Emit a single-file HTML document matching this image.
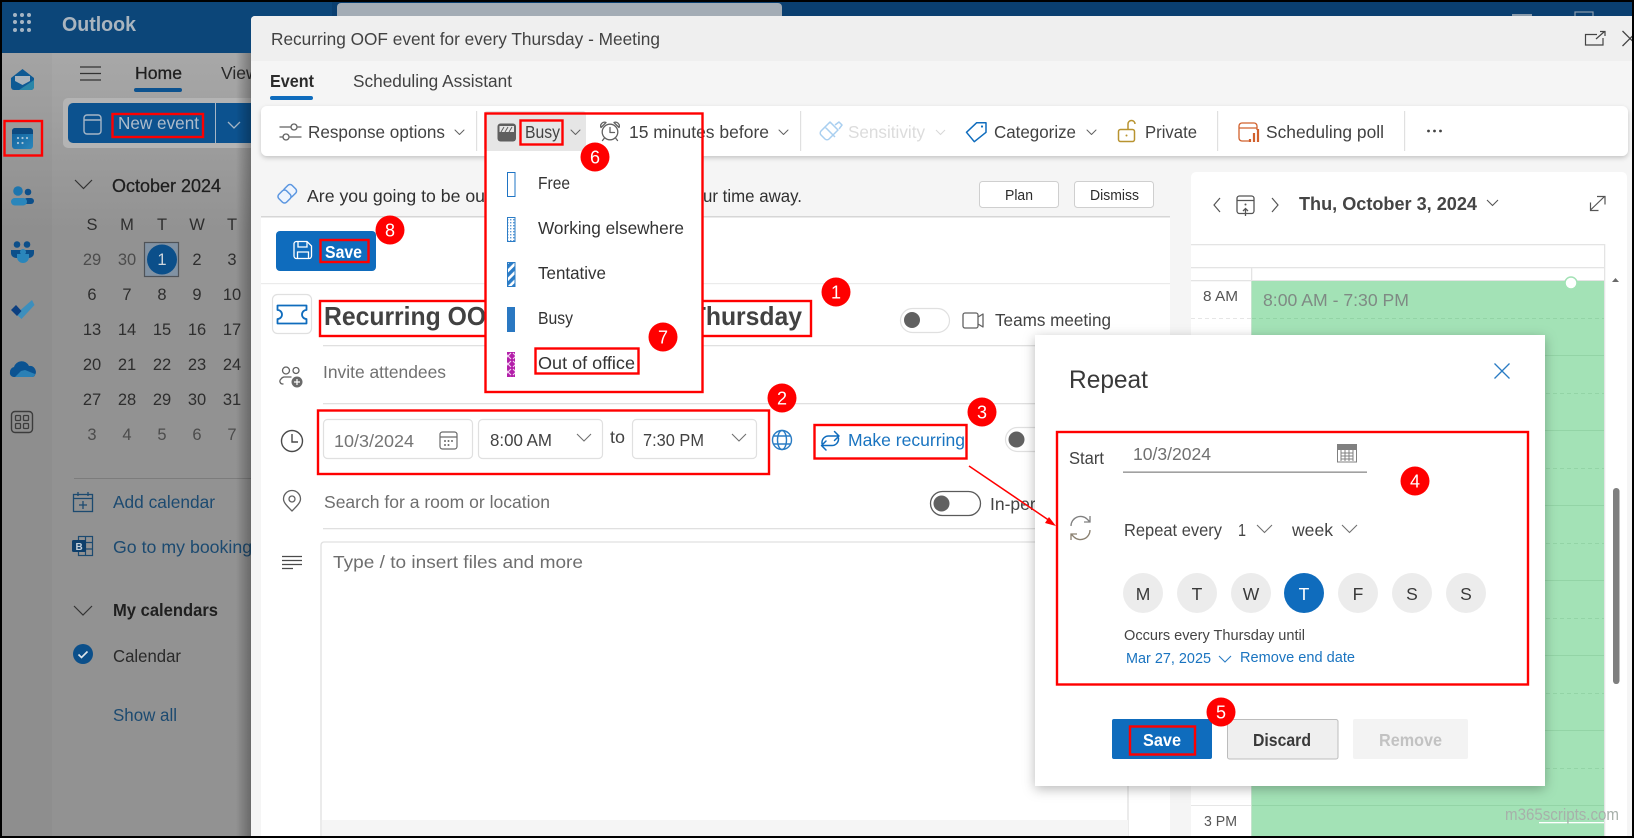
<!DOCTYPE html>
<html><head><meta charset="utf-8"><title>Recurring OOF event</title>
<style>
html,body{margin:0;padding:0;background:#000;width:1634px;height:838px;overflow:hidden}
svg{display:block;font-family:"Liberation Sans",Arial,sans-serif;font-size:17.5px;fill:#424242}
.b{font-weight:700}
.m{text-anchor:middle}
.n{font-size:16.5px;fill:#2e2e2e;text-anchor:middle}
.n2{font-size:16.5px;fill:#4c4c4c;text-anchor:middle}
.ln{fill:none;stroke:#616161;stroke-width:1.3;stroke-linecap:round;stroke-linejoin:round}
.bl{fill:none;stroke:#0f6cbd;stroke-width:1.5;stroke-linecap:round;stroke-linejoin:round}
.bg{fill:#fff;stroke:#e0e0e0;stroke-width:1.2}
.rb{fill:none;stroke:#f00;stroke-width:2.4}
.bd{fill:#f00}
.bt{fill:#fff;font-size:18px;text-anchor:middle}
.sep{stroke:#e0e0e0;stroke-width:1.4}
</style></head><body>
<svg width="1634" height="838" viewBox="0 0 1634 838" xmlns="http://www.w3.org/2000/svg">
<defs>
<linearGradient id="side" x1="0" y1="53" x2="0" y2="230" gradientUnits="userSpaceOnUse"><stop offset="0" stop-color="#a8a8a8"/><stop offset="1" stop-color="#929292"/></linearGradient>
<linearGradient id="rail" x1="0" y1="53" x2="0" y2="230" gradientUnits="userSpaceOnUse"><stop offset="0" stop-color="#a4a4a4"/><stop offset="1" stop-color="#8e8e8e"/></linearGradient>
<linearGradient id="sh" x1="0" y1="0" x2="1" y2="0"><stop offset="0" stop-color="#000" stop-opacity="0"/><stop offset="1" stop-color="#000" stop-opacity=".28"/></linearGradient>
<linearGradient id="cal" x1="0" y1="0" x2="1" y2="1"><stop offset="0" stop-color="#0e5f9b"/><stop offset="1" stop-color="#2a86bb"/></linearGradient>
<pattern id="stripe" width="6" height="6" patternUnits="userSpaceOnUse" patternTransform="rotate(-45)"><rect width="6" height="6" fill="#fff"/><rect width="6" height="3.4" fill="#2b7cc6"/></pattern>
<pattern id="dots" width="3" height="3" patternUnits="userSpaceOnUse"><rect width="3" height="3" fill="#fff"/><rect width="1.4" height="1.4" fill="#5d9bd5"/></pattern>
<pattern id="oof" width="8" height="8" patternUnits="userSpaceOnUse"><rect width="8" height="8" fill="#b31fa9"/><path d="M1 1l6 6M7 1l-6 6" stroke="#f3d2f0" stroke-width="1.2"/></pattern>
<filter id="ds" x="-10%" y="-10%" width="120%" height="130%"><feDropShadow dx="0" dy="2" stdDeviation="2.5" flood-color="#000" flood-opacity=".2"/></filter>
<filter id="ds2" x="-10%" y="-10%" width="120%" height="120%"><feDropShadow dx="0" dy="3" stdDeviation="6" flood-color="#000" flood-opacity=".28"/></filter>
</defs>

<!-- frame -->
<rect width="1634" height="838" fill="#000"/>
<rect x="2" y="2" width="1630" height="834" fill="#0a3f70"/>
<!-- top bar -->
<rect x="2" y="2" width="1630" height="51" fill="#0a3f70"/>
<rect x="2" y="2" width="330" height="51" fill="#0c4679"/>
<rect x="337" y="3" width="445" height="20" rx="4" fill="#a3acb5"/>
<g fill="#a5b5c4"><circle cx="15" cy="15" r="2"/><circle cx="22" cy="15" r="2"/><circle cx="29" cy="15" r="2"/><circle cx="15" cy="22" r="2"/><circle cx="22" cy="22" r="2"/><circle cx="29" cy="22" r="2"/><circle cx="15" cy="30" r="2"/><circle cx="22" cy="30" r="2"/><circle cx="29" cy="30" r="2"/></g>
<text x="62" y="31" textLength="74" lengthAdjust="spacingAndGlyphs" class="b" style="font-size:20px;fill:#aab5bf">Outlook</text>
<rect x="1512" y="14" width="20" height="2" fill="#8a9bab"/>
<rect x="1575" y="12" width="18" height="8" fill="none" stroke="#8a9bab" stroke-width="1.2"/>

<!-- rail + sidebar -->
<rect x="2" y="53" width="50" height="783" fill="url(#rail)"/>
<rect x="52" y="53" width="200" height="783" fill="url(#side)"/>

<!-- rail icons -->
<path d="M22.5 69L34 78V87a3 3 0 0 1-3 3H14a3 3 0 0 1-3-3V78Z" fill="#0e5a94"/>
<path d="M15 76h15v5l-7.500 4-7.500-4z" fill="#a9b3bc"/>
<path d="M19 90L34 80v7a3 3 0 0 1-3 3z" fill="#2a86a8"/>
<rect x="12" y="128" width="21" height="21" rx="3" fill="url(#cal)"/>
<path d="M12 134v-3a3 3 0 0 1 3-3h15a3 3 0 0 1 3 3v3z" fill="#0c4a80"/>
<g fill="#a8c4d8"><circle cx="18" cy="138" r="1.100"/><circle cx="22.500" cy="138" r="1.100"/><circle cx="27" cy="138" r="1.100"/><circle cx="18" cy="143" r="1.100"/><circle cx="22.500" cy="143" r="1.100"/></g>
<circle cx="18" cy="191" r="4.800" fill="#1c75ae"/><circle cx="28" cy="192" r="3.300" fill="#0c4f8a"/>
<rect x="24" y="198" width="10" height="6" rx="3" fill="#0c4f8a"/><rect x="11" y="198" width="16" height="7.500" rx="3.700" fill="#2a86bb"/>
<circle cx="17" cy="244.500" r="3.300" fill="#0c4f8a"/><circle cx="27" cy="244.500" r="3.300" fill="#0c4f8a"/>
<path d="M11 250h23v3a5 5 0 0 1-5 5H16a5 5 0 0 1-5-5z" fill="#0c4f8a"/><path d="M17 254h12v3a6 6 0 0 1-12 0z" fill="#2a86bb"/><circle cx="23" cy="252" r="3" fill="#2a86bb"/>
<polygon points="32,300 34.500,305 21.500,319 16,314" fill="#3d8fbd"/><polygon points="16,305 21.500,311 17,316 11,310" fill="#0c3f80"/>
<path d="M10 372a5 5 0 0 1 4-5 8 8 0 0 1 15-1 6 6 0 0 1 6 9 3 3 0 0 1-3 2H14a4 4 0 0 1-4-5z" fill="#0c5391"/>
<path d="M15 377l6-6 4-1 10 4a3 3 0 0 1-3 3z" fill="#2b80b5"/>
<rect x="11.500" y="411.500" width="21" height="21" rx="3.500" fill="none" stroke="#3c3c3c" stroke-width="1.400"/>
<g fill="none" stroke="#3c3c3c" stroke-width="1.300"><rect x="15.500" y="415.500" width="5" height="5" rx="1"/><rect x="23.500" y="415.500" width="5" height="5" rx="1"/><rect x="15.500" y="423.500" width="5" height="5" rx="1"/><rect x="23.500" y="423.500" width="5" height="5" rx="1"/></g>
<rect x="4.500" y="121" width="37.500" height="34.500" class="rb"/>

<!-- ribbon behind modal -->
<path d="M80 67h21M80 73.500h21M80 80h21" stroke="#333" stroke-width="1.300"/>
<text x="135" y="79" textLength="47" lengthAdjust="spacingAndGlyphs" style="fill:#1f1f1f;stroke:#1f1f1f;stroke-width:.3">Home</text>
<rect x="134" y="88" width="48" height="4" rx="2" fill="#0c528f"/>
<text x="221" y="79" style="fill:#2a2a2a">View</text>
<rect x="63" y="98" width="195" height="50" rx="5" fill="#b4b4b4"/>
<rect x="68" y="103" width="190" height="40" rx="5" fill="#0c528f"/>
<rect x="84" y="115" width="17" height="19" rx="3" fill="none" stroke="#a6b6c6" stroke-width="1.400"/><path d="M84 120h17" stroke="#a6b6c6" stroke-width="1.400"/>
<text x="118" y="129" textLength="81" lengthAdjust="spacingAndGlyphs" style="fill:#aebccb">New event</text>
<rect x="112.500" y="114" width="90.500" height="23" class="rb"/>
<rect x="215" y="103" width="1" height="40" fill="#a6b6c6"/>
<path d="M228 122l6 6 6-6" fill="none" stroke="#a6b6c6" stroke-width="1.300"/>

<!-- month -->
<path d="M75 180l8.500 8.500L92 180" fill="none" stroke="#333" stroke-width="1.200"/>
<text x="112" y="192" textLength="109" lengthAdjust="spacingAndGlyphs" style="font-size:18px;fill:#1e1e1e;stroke:#1e1e1e;stroke-width:.25">October 2024</text>
<g class="n">
<text x="92" y="230" class="n">S</text><text x="127" y="230" class="n">M</text><text x="162" y="230" class="n">T</text><text x="197" y="230" class="n">W</text><text x="232" y="230" class="n">T</text>
</g>
<rect x="144.500" y="242.500" width="34" height="34" fill="#8192a3" stroke="#4f5358" stroke-width="1.200"/>
<circle cx="162" cy="259.500" r="15" fill="#0b4f8a"/>
<text x="162" y="265" class="n" style="fill:#cfd6dd">1</text>
<text x="92" y="265" class="n2">29</text><text x="127" y="265" class="n2">30</text><text x="197" y="265" class="n">2</text><text x="232" y="265" class="n">3</text>
<text x="92" y="300" class="n">6</text><text x="127" y="300" class="n">7</text><text x="162" y="300" class="n">8</text><text x="197" y="300" class="n">9</text><text x="232" y="300" class="n">10</text>
<text x="92" y="335" class="n">13</text><text x="127" y="335" class="n">14</text><text x="162" y="335" class="n">15</text><text x="197" y="335" class="n">16</text><text x="232" y="335" class="n">17</text>
<text x="92" y="370" class="n">20</text><text x="127" y="370" class="n">21</text><text x="162" y="370" class="n">22</text><text x="197" y="370" class="n">23</text><text x="232" y="370" class="n">24</text>
<text x="92" y="405" class="n">27</text><text x="127" y="405" class="n">28</text><text x="162" y="405" class="n">29</text><text x="197" y="405" class="n">30</text><text x="232" y="405" class="n">31</text>
<text x="92" y="440" class="n2">3</text><text x="127" y="440" class="n2">4</text><text x="162" y="440" class="n2">5</text><text x="197" y="440" class="n2">6</text><text x="232" y="440" class="n2">7</text>

<rect x="74" y="478" width="178" height="1" fill="#7c7c7c"/>
<g fill="none" stroke="#1c4a70" stroke-width="1.300"><rect x="73.500" y="494.500" width="19" height="17"/><path d="M73.500 498.500h19M78 492v4M88 492v4M83 501v8M79 505h8"/></g>
<text x="113" y="508" textLength="102" lengthAdjust="spacingAndGlyphs" style="fill:#1c4a70">Add calendar</text>
<g fill="none" stroke="#1c4a70" stroke-width="1.200"><rect x="78.500" y="536.500" width="14" height="19"/><path d="M85.500 536.500v19M85.500 542.500h7M85.500 549h7"/></g>
<rect x="72" y="540" width="14" height="12" rx="1.500" fill="#0e3f6b"/><text x="75.500" y="550" class="b" style="font-size:10px;fill:#c4d0da">B</text>
<text x="113" y="553" textLength="148" lengthAdjust="spacingAndGlyphs" style="fill:#1c4a70">Go to my bookings</text>
<path d="M74 606l9 9 9-9" fill="none" stroke="#333" stroke-width="1.200"/>
<text x="113" y="616" textLength="105" lengthAdjust="spacingAndGlyphs" class="b" style="fill:#1f1f1f">My calendars</text>
<circle cx="83" cy="654" r="10" fill="#0b4f8a"/><path d="M78.500 654.500l3 3 6-6" fill="none" stroke="#dfe6ec" stroke-width="1.600"/>
<text x="113" y="662" textLength="68" lengthAdjust="spacingAndGlyphs" style="fill:#2a2a2a">Calendar</text>
<text x="113" y="721" textLength="64" lengthAdjust="spacingAndGlyphs" style="fill:#1c4a70">Show all</text>

<!-- modal -->
<rect x="236" y="53" width="15" height="783" fill="url(#sh)"/>
<path d="M251 20a4 4 0 0 1 4-4H1632V836H251Z" fill="#f5f5f5"/>
<path d="M251 61V20a4 4 0 0 1 4-4H1632V61Z" fill="#efefef"/>
<text x="271" y="45" textLength="389" lengthAdjust="spacingAndGlyphs">Recurring OOF event for every Thursday - Meeting</text>
<path d="M1597 34.500h-11.500v10.500h17.500v-7" fill="none" stroke="#444" stroke-width="1.200"/><path d="M1596 39l8.500-7.500M1600 31.500h5v4.500" fill="none" stroke="#444" stroke-width="1.200"/>
<path d="M1622.500 31l15 15M1622.500 46l15-15" fill="none" stroke="#444" stroke-width="1.300"/>
<text x="270" y="87" textLength="44" lengthAdjust="spacingAndGlyphs" class="b" style="fill:#2c2c2c">Event</text>
<rect x="270" y="96" width="43" height="4" rx="2" fill="#0f6cbd"/>
<text x="353" y="87" textLength="159" lengthAdjust="spacingAndGlyphs">Scheduling Assistant</text>

<!-- toolbar -->
<rect x="261" y="106" width="1367" height="50" rx="6" fill="#fff" filter="url(#ds)"/>
<g class="ln"><path d="M280 127h11M298 127h3M280 137h3M290 137h11"/><circle cx="294" cy="127" r="3"/><circle cx="286" cy="137" r="3"/></g>
<text x="308" y="138" textLength="137" lengthAdjust="spacingAndGlyphs">Response options</text>
<path d="M455 130l4.500 4.500 4.500-4.500" class="ln" style="stroke-width:1"/>
<rect x="476" y="111" width="1.200" height="40" fill="#e0e0e0"/>
<rect x="484" y="111" width="102" height="40" rx="3" fill="#e6e6e6"/>
<rect x="497.500" y="123.500" width="18.500" height="18" rx="3" fill="#5f5f5f"/>
<rect x="499.500" y="126" width="14.500" height="6" fill="#e6e6e6"/><path d="M501 132l3-5M505 132l3-5M509 132l3-5" stroke="#5f5f5f" stroke-width="1"/>
<text x="525" y="138" textLength="35" lengthAdjust="spacingAndGlyphs">Busy</text>
<path d="M571 130l4.500 4.500 4.500-4.500" class="ln" style="stroke-width:1"/>
<rect x="520.500" y="120.500" width="42" height="24" class="rb"/>
<g class="ln"><circle cx="610" cy="132" r="7.800"/><path d="M610 127.500v5h4.500M601 127.500a3.800 3.800 0 0 1 5-5zM619 127.500a3.800 3.800 0 0 0-5-5zM604.500 138l-2 2.500M615.500 138l2 2.500"/></g>
<text x="629" y="138" textLength="140" lengthAdjust="spacingAndGlyphs">15 minutes before</text>
<path d="M779 130l4.500 4.500 4.500-4.500" class="ln" style="stroke-width:1"/>
<rect x="800" y="111" width="1.200" height="40" fill="#e0e0e0"/>
<g fill="none" stroke="#a9cff0" stroke-width="1.500" stroke-linejoin="round"><path d="M821 131l9-9 8 8-9 9a3 3 0 0 1-4 0l-4-4a3 3 0 0 1 0-4zM825 127l10 10"/><path d="M835 125l4-3 3 3-3 4"/></g>
<text x="848" y="138" textLength="77" lengthAdjust="spacingAndGlyphs" style="fill:#dcdcdc">Sensitivity</text>
<path d="M936 130l4.500 4.500 4.500-4.500" fill="none" stroke="#d8d8d8" stroke-width="1"/>
<path d="M966.500 132.300L976.700 122.700H986V132.300L974.300 141.700Z" class="bl"/><circle cx="982" cy="126.500" r="1.100" fill="#0f6cbd"/>
<text x="994" y="138" textLength="82" lengthAdjust="spacingAndGlyphs">Categorize</text>
<path d="M1087 130l4.500 4.500 4.500-4.500" class="ln" style="stroke-width:1"/>
<g fill="none" stroke="#b89330" stroke-width="1.500"><rect x="1118.500" y="129.500" width="16" height="12" rx="2"/><path d="M1128 129v-5a3.500 3.500 0 0 1 7 0"/></g><circle cx="1126.500" cy="135.500" r="1" fill="#b89330"/>
<text x="1145" y="138" textLength="52" lengthAdjust="spacingAndGlyphs">Private</text>
<rect x="1217" y="111" width="1.200" height="40" fill="#e0e0e0"/>
<path d="M1250 141h-8a3 3 0 0 1-3-3v-12a3 3 0 0 1 3-3h12a3 3 0 0 1 3 3v4M1239 128h18" fill="none" stroke="#d1602c" stroke-width="1.300"/>
<path d="M1250 142v-3M1254 142v-9M1258 142v-13" stroke="#d1602c" stroke-width="2.200"/>
<text x="1266" y="138" textLength="118" lengthAdjust="spacingAndGlyphs">Scheduling poll</text>
<rect x="1404" y="111" width="1.200" height="40" fill="#e0e0e0"/>
<g fill="#444"><circle cx="1428.500" cy="131" r="1.400"/><circle cx="1434.500" cy="131" r="1.400"/><circle cx="1440.500" cy="131" r="1.400"/></g>

<!-- left form -->
<rect x="261" y="172" width="909" height="664" fill="#fff"/>
<rect x="261" y="172" width="909" height="44" fill="#f5f5f5"/>
<rect x="261" y="216" width="909" height="1.500" fill="#d6d6d6"/>
<g fill="#eef4fd" stroke="#5b96e0" stroke-width="1.500"><rect x="284.500" y="185.500" width="11" height="11" rx="3" transform="rotate(45 290 191)"/><rect x="279" y="191" width="11" height="11" rx="3" transform="rotate(45 284.500 196.500)"/></g>
<text x="307" y="202" textLength="178" lengthAdjust="spacingAndGlyphs" style="fill:#303030">Are you going to be ou</text>
<text x="703" y="202" textLength="99" lengthAdjust="spacingAndGlyphs" style="fill:#303030">ur time away.</text>
<rect x="979.500" y="181.500" width="79" height="26" rx="3" fill="#fff" stroke="#cfcfcf"/>
<text x="1005" y="200" textLength="28" lengthAdjust="spacingAndGlyphs" style="font-size:15px;fill:#2c2c2c">Plan</text>
<rect x="1074.500" y="181.500" width="79" height="26" rx="3" fill="#fff" stroke="#cfcfcf"/>
<text x="1090" y="200" textLength="49" lengthAdjust="spacingAndGlyphs" style="font-size:15px;fill:#2c2c2c">Dismiss</text>

<rect x="276" y="231" width="100" height="40" rx="4" fill="#0f6cbd"/>
<g fill="none" stroke="#fff" stroke-width="1.300"><path d="M294 244a2.500 2.500 0 0 1 2.500-2.500H307l4.500 4.500V256a2.500 2.500 0 0 1-2.500 2.500H296.500A2.500 2.500 0 0 1 294 256Z"/><path d="M298 242v5h9v-5M297.500 258v-6h11v6"/></g>
<text x="325" y="258" textLength="37" lengthAdjust="spacingAndGlyphs" class="b" style="fill:#fff">Save</text>
<rect x="320.500" y="240" width="48" height="22" class="rb"/>
<rect x="261" y="283" width="909" height="1.200" fill="#ebebeb"/>

<rect x="272.500" y="294.500" width="39" height="39" rx="5" class="bg"/>
<path d="M277.500 305.500H306.500V310a4.500 4.500 0 0 0 0 9V323.500H277.500V319a4.500 4.500 0 0 0 0-9Z" class="bl" style="stroke-width:1.800"/>
<text x="324" y="325" textLength="478" lengthAdjust="spacingAndGlyphs" class="b" style="font-size:26px;fill:#424242">Recurring OOF event for every Thursday</text>
<rect x="320" y="301" width="491" height="35" class="rb"/>
<rect x="900.500" y="308.500" width="49" height="24" rx="12" fill="#fff" stroke="#e0e0e0" stroke-width="1.200"/>
<circle cx="912" cy="320" r="8" fill="#616161"/>
<path d="M963 315a2 2 0 0 1 2-2h11a2 2 0 0 1 2 2v11a2 2 0 0 1-2 2h-11a2 2 0 0 1-2-2zM978 317l5-3v13l-5-3" class="ln"/>
<text x="995" y="326" textLength="116" lengthAdjust="spacingAndGlyphs">Teams meeting</text>
<rect x="323" y="345" width="847" height="1.300" fill="#e0e0e0"/>

<g class="ln"><circle cx="286" cy="370.500" r="3.500"/><circle cx="296" cy="370.500" r="3"/><path d="M283 384a2.800 2.800 0 0 1-2-5 4.500 4.500 0 0 1 3-2h7"/></g>
<circle cx="297" cy="382" r="5.500" fill="#6a6a6a"/><path d="M297 379v6M294 382h6" stroke="#fff" stroke-width="1.200"/>
<text x="323" y="378" textLength="123" lengthAdjust="spacingAndGlyphs" style="fill:#707070">Invite attendees</text>
<rect x="323" y="403" width="847" height="1.300" fill="#e0e0e0"/>

<circle cx="292" cy="441" r="10.500" fill="none" stroke="#4a4a4a" stroke-width="1.400"/><path d="M292 434v8h6" fill="none" stroke="#4a4a4a" stroke-width="1.400"/>
<rect x="323.500" y="419.500" width="149" height="39" rx="4" class="bg"/>
<text x="334" y="447" textLength="80" lengthAdjust="spacingAndGlyphs" style="fill:#757575">10/3/2024</text>
<g fill="none" stroke="#6a6a6a" stroke-width="1.200"><rect x="440" y="432" width="17" height="17" rx="2.500"/><path d="M440 437h17"/></g>
<g fill="#6a6a6a"><circle cx="445" cy="441" r="1"/><circle cx="448.500" cy="441" r="1"/><circle cx="452" cy="441" r="1"/><circle cx="445" cy="445" r="1"/><circle cx="448.500" cy="445" r="1"/></g>
<rect x="478.500" y="419.500" width="124" height="39" rx="4" class="bg"/>
<text x="490" y="446" textLength="62" lengthAdjust="spacingAndGlyphs">8:00 AM</text>
<path d="M577 434l7 7 7-7" fill="none" stroke="#707070" stroke-width="1.100"/>
<text x="610" y="443" textLength="15" lengthAdjust="spacingAndGlyphs">to</text>
<rect x="632.500" y="419.500" width="124" height="39" rx="4" class="bg"/>
<text x="643" y="446" textLength="61" lengthAdjust="spacingAndGlyphs">7:30 PM</text>
<path d="M732 434l7 7 7-7" fill="none" stroke="#707070" stroke-width="1.100"/>
<rect x="318" y="410.500" width="451" height="63.500" class="rb"/>
<g fill="none" stroke="#2a7cc4" stroke-width="1.400"><circle cx="782" cy="440" r="9.500"/><ellipse cx="782" cy="440" rx="4.500" ry="9.500"/><path d="M773 436h18M773 444h18"/></g>

<path d="M822 443.500v-1a6.500 6.500 0 0 1 6.500-6.500H838.500M834.500 431.500l4.500 4.500-4.500 4.500M838.500 438v1a6.500 6.500 0 0 1-6.500 6.500H822M826 441l-4.500 4.500 4.500 4.500" class="bl"/>
<text x="848" y="446" textLength="117" lengthAdjust="spacingAndGlyphs" style="fill:#1a74c0">Make recurring</text>
<rect x="814.500" y="425" width="152" height="33.500" class="rb"/>
<rect x="1005.500" y="427.500" width="50" height="24" rx="12" fill="#fff" stroke="#e0e0e0" stroke-width="1.200"/>
<circle cx="1016.500" cy="439.500" r="8" fill="#616161"/>

<g class="ln"><path d="M292 511c-5-5-8.500-8.500-8.500-12a8.500 8.500 0 0 1 17 0c0 3.500-3.500 7-8.500 12z"/><circle cx="292" cy="499" r="3"/></g>
<text x="324" y="508" textLength="226" lengthAdjust="spacingAndGlyphs" style="fill:#6e6e6e">Search for a room or location</text>
<rect x="930.500" y="491.500" width="50" height="24" rx="12" fill="#fff" stroke="#5a5a5a" stroke-width="1.300"/>
<circle cx="941.500" cy="503.500" r="8" fill="#616161"/>
<text x="990" y="510" style="fill:#444">In-person event</text>
<rect x="323" y="528" width="847" height="1.300" fill="#e0e0e0"/>

<path d="M282 556.500h20M282 560.500h20M282 564.500h20M282 568.500h11" stroke="#4a4a4a" stroke-width="1.200"/>
<path d="M1128 836V545a3 3 0 0 0-3-3H324a3 3 0 0 0-3 3V836" fill="#fff" stroke="#e0e0e0" stroke-width="1.300"/>
<text x="333" y="568" textLength="250" lengthAdjust="spacingAndGlyphs" style="fill:#6e6e6e">Type / to insert files and more</text>
<rect x="322" y="820" width="806" height="16" fill="#f5f5f5"/>

<!-- calendar panel -->
<rect x="1191" y="172" width="436" height="670" rx="5" fill="#fff"/>
<path d="M1220 198l-6 7 6 7M1272 198l6 7-6 7" fill="none" stroke="#555" stroke-width="1.200"/>
<g fill="none" stroke="#555" stroke-width="1.300"><rect x="1237" y="196" width="17" height="17.500" rx="2.500"/><path d="M1237 200.500h17M1245.500 216v-7M1243 211l2.500-2.500 2.500 2.500"/></g><circle cx="1245.500" cy="204.500" r="1" fill="#555"/>
<text x="1299" y="210" textLength="178" lengthAdjust="spacingAndGlyphs" class="b" style="font-size:18.500px;fill:#454545">Thu, October 3, 2024</text>
<path d="M1487 200l5.500 5.500 5.500-5.500" fill="none" stroke="#555" stroke-width="1.100"/>
<path d="M1590.500 210l14-13.500M1597 196.500h8v8M1590.500 202.500v8h8" fill="none" stroke="#555" stroke-width="1.200"/>
<rect x="1191" y="244" width="413" height="1.300" fill="#e4e4e4"/>
<rect x="1191" y="267" width="413" height="1.300" fill="#e4e4e4"/>
<rect x="1191" y="280" width="413" height="1.300" fill="#e4e4e4"/>
<rect x="1604" y="244" width="1.300" height="592" fill="#e4e4e4"/>
<rect x="1251" y="267" width="1.300" height="569" fill="#e4e4e4"/>
<rect x="1251.500" y="281" width="352.500" height="555" fill="#a3e2b6"/>
<g stroke="#93d4a6" stroke-width="1">
<path d="M1252 355.500h352M1252 430.500h352M1252 505.500h352M1252 580.500h352M1252 655.500h352M1252 730.500h352M1252 805.500h352"/>
<path stroke-dasharray="4 3" d="M1252 318.500h352M1252 393.500h352M1252 468.500h352M1252 543.500h352M1252 618.500h352M1252 693.500h352M1252 768.500h352"/>
</g>
<g stroke="#e6e6e6" stroke-width="1">
<path d="M1191 355.500h60M1191 805.500h60"/>
<path stroke-dasharray="4 3" d="M1191 318.500h60"/>
</g>
<text x="1203" y="301" textLength="35" lengthAdjust="spacingAndGlyphs" style="font-size:15px;fill:#555">8 AM</text>
<text x="1204" y="826" textLength="33" lengthAdjust="spacingAndGlyphs" style="font-size:15px;fill:#555">3 PM</text>
<text x="1263" y="306" textLength="146" lengthAdjust="spacingAndGlyphs" style="fill:#7f8a84">8:00 AM - 7:30 PM</text>
<circle cx="1571" cy="283" r="6" fill="#fff" stroke="#a3e2b6" stroke-width="1.500"/>
<path d="M1612 282l3.500-4 3.500 4z" fill="#6a6a6a"/>
<rect x="1613" y="488" width="6.500" height="196" rx="3.200" fill="#7f7f7f"/>
<rect x="1539" y="822" width="65" height="1.300" fill="#fff"/>
<text x="1505" y="820" textLength="114" lengthAdjust="spacingAndGlyphs" style="font-size:17px;fill:#a7b0aa">m365scripts.com</text>

<!-- Repeat dialog -->
<rect x="1035" y="335" width="510" height="451" fill="#fff" filter="url(#ds2)"/>
<text x="1069" y="388" textLength="79" lengthAdjust="spacingAndGlyphs" style="font-size:25px;fill:#3a3a3a">Repeat</text>
<path d="M1494.500 363.500l15 15M1509.500 363.500l-15 15" fill="none" stroke="#2a7cc4" stroke-width="1.300"/>
<rect x="1057" y="432" width="471" height="252.500" class="rb"/>
<text x="1069" y="464" textLength="35" lengthAdjust="spacingAndGlyphs">Start</text>
<text x="1133" y="460" textLength="78" lengthAdjust="spacingAndGlyphs" style="fill:#707070">10/3/2024</text>
<rect x="1123" y="471.500" width="244" height="1.300" fill="#8a8a8a"/>
<g fill="none" stroke="#808080" stroke-width="1"><rect x="1337.500" y="444.500" width="19" height="17.500"/><path d="M1337.500 449.500h19M1341 453h12M1341 456h12M1341 459h12M1341 450v11M1345 450v11M1349 450v11M1353 450v11"/></g>
<rect x="1337" y="444" width="20" height="5" fill="#808080"/>
<g fill="none" stroke="#808080" stroke-width="1.300"><path d="M1071 526a9.500 9.500 0 0 1 16-7l3 3M1090 516v6h-6"/><path d="M1090 530a9.500 9.500 0 0 1-16 7l-3-3M1071 540v-6h6" stroke="#8a8070"/></g>
<text x="1124" y="536" textLength="98" lengthAdjust="spacingAndGlyphs" style="fill:#444">Repeat every</text>
<text x="1238" y="536" textLength="8" lengthAdjust="spacingAndGlyphs" style="fill:#444">1</text>
<path d="M1257 525l7.500 7.500 7.500-7.500" fill="none" stroke="#707070" stroke-width="1.100"/>
<text x="1292" y="536" textLength="41" lengthAdjust="spacingAndGlyphs" style="fill:#444">week</text>
<path d="M1342 525l7.500 7.500 7.500-7.500" fill="none" stroke="#707070" stroke-width="1.100"/>
<g fill="#ececec"><circle cx="1143" cy="593" r="20"/><circle cx="1197" cy="593" r="20"/><circle cx="1251" cy="593" r="20"/><circle cx="1358" cy="593" r="20"/><circle cx="1412" cy="593" r="20"/><circle cx="1466" cy="593" r="20"/></g>
<circle cx="1304" cy="593" r="20" fill="#0f6cbd"/>
<text x="1143" y="600" class="m" style="fill:#3a3a3a">M</text><text x="1197" y="600" class="m" style="fill:#3a3a3a">T</text><text x="1251" y="600" class="m" style="fill:#3a3a3a">W</text><text x="1304" y="600" class="m" style="fill:#fff">T</text><text x="1358" y="600" class="m" style="fill:#3a3a3a">F</text><text x="1412" y="600" class="m" style="fill:#3a3a3a">S</text><text x="1466" y="600" class="m" style="fill:#3a3a3a">S</text>
<text x="1124" y="640" textLength="181" lengthAdjust="spacingAndGlyphs" style="font-size:15px;fill:#444">Occurs every Thursday until</text>
<text x="1126" y="663" textLength="85" lengthAdjust="spacingAndGlyphs" style="font-size:15px;fill:#1a74c0">Mar 27, 2025</text>
<path d="M1219 656l6 6 6-6" fill="none" stroke="#2a7cc4" stroke-width="1.100"/>
<text x="1240" y="662" textLength="115" lengthAdjust="spacingAndGlyphs" style="font-size:15px;fill:#1a74c0">Remove end date</text>
<rect x="1112" y="719" width="100" height="40" rx="2" fill="#0f6cbd"/>
<text x="1143" y="746" textLength="38" lengthAdjust="spacingAndGlyphs" class="b" style="fill:#fff">Save</text>
<rect x="1130" y="726.500" width="65" height="28" class="rb"/>
<rect x="1227.500" y="719.500" width="110.500" height="39.500" rx="2" fill="#efefef" stroke="#bcbcbc"/>
<text x="1253" y="746" textLength="58" lengthAdjust="spacingAndGlyphs" class="b" style="fill:#3a3a3a">Discard</text>
<rect x="1353" y="719" width="115" height="40" rx="2" fill="#f3f3f3"/>
<text x="1379" y="746" textLength="63" lengthAdjust="spacingAndGlyphs" class="b" style="fill:#c2c2c2">Remove</text>

<!-- status dropdown -->
<rect x="486" y="151" width="216" height="241" fill="#fff"/>
<rect x="507.500" y="172.500" width="7.500" height="24" fill="#fff" stroke="#1f74c4" stroke-width="1"/>
<text x="538" y="189" textLength="32" lengthAdjust="spacingAndGlyphs" style="fill:#333">Free</text>
<rect x="507.500" y="217.500" width="7.500" height="24" fill="url(#dots)" stroke="#2b7cc6" stroke-width="1"/>
<text x="538" y="234" textLength="146" lengthAdjust="spacingAndGlyphs" style="fill:#333">Working elsewhere</text>
<rect x="507.500" y="262.500" width="7.500" height="24" fill="url(#stripe)" stroke="#2b7cc6" stroke-width="1"/>
<text x="538" y="279" textLength="68" lengthAdjust="spacingAndGlyphs" style="fill:#333">Tentative</text>
<rect x="507" y="307" width="8" height="25" fill="#2a78c2"/>
<text x="538" y="324" textLength="35" lengthAdjust="spacingAndGlyphs" style="fill:#333">Busy</text>
<rect x="507" y="352" width="8" height="25" fill="url(#oof)"/>
<text x="538" y="369" textLength="97" lengthAdjust="spacingAndGlyphs" style="fill:#333">Out of office</text>
<rect x="535.500" y="348.500" width="103" height="25" class="rb"/>
<rect x="485.500" y="113.500" width="217" height="278.500" class="rb"/>

<!-- arrow -->
<path d="M969 466L1050 521" stroke="#f00" stroke-width="1.500"/><path d="M1056 526l-11-3 4-6z" fill="#f00"/>

<!-- badges -->
<circle class="bd" cx="836" cy="292" r="14.500"/><text class="bt" x="836" y="298.500">1</text>
<circle class="bd" cx="782" cy="398" r="14.500"/><text class="bt" x="782" y="404.500">2</text>
<circle class="bd" cx="982" cy="412" r="14.500"/><text class="bt" x="982" y="418.500">3</text>
<circle class="bd" cx="1415" cy="481" r="14.500"/><text class="bt" x="1415" y="487.500">4</text>
<circle class="bd" cx="1221" cy="712" r="14.500"/><text class="bt" x="1221" y="718.500">5</text>
<circle class="bd" cx="595" cy="157" r="14.500"/><text class="bt" x="595" y="163.500">6</text>
<circle class="bd" cx="663" cy="337" r="14.500"/><text class="bt" x="663" y="343.500">7</text>
<circle class="bd" cx="390" cy="230" r="14.500"/><text class="bt" x="390" y="236.500">8</text>

<!-- frame edges on top -->
<rect x="0" y="0" width="1634" height="2" fill="#000"/><rect x="0" y="836" width="1634" height="2" fill="#000"/><rect x="0" y="0" width="2" height="838" fill="#000"/><rect x="1632" y="0" width="2" height="838" fill="#000"/>
</svg>
</body></html>
